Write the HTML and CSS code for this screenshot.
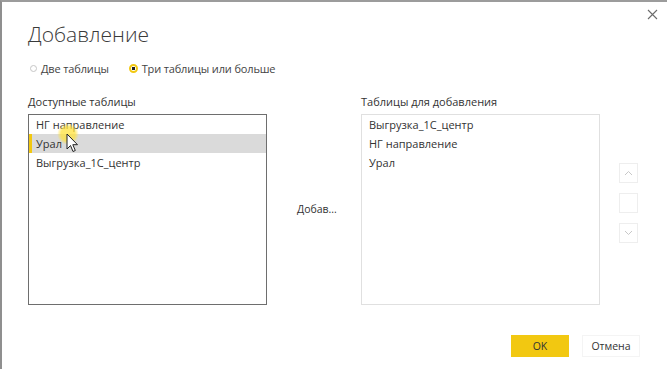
FILE: index.html
```html
<!DOCTYPE html>
<html lang="ru">
<head>
  <meta charset="UTF-8" />
  <title>Добавление</title>
  <link rel="stylesheet" href="styles.css">
</head>
<body>
  <div class="dialog">
    <!-- close -->
    <div class="top-bar">
      <svg class="close" width="11" height="11" viewBox="0 0 11 11">
        <path d="M1 1 L10 10 M10 1 L1 10" stroke="#6b6b6b" stroke-width="1.1" fill="none"/>
      </svg>
    </div>

    <h1 class="title">Добавление</h1>

    <div class="radios">
      <label class="radio"><span class="dot"></span>Две таблицы</label>
      <label class="radio checked"><span class="dot"></span>Три таблицы или больше</label>
    </div>

    <div class="lists">
      <div class="column">
        <p class="label">Доступные таблицы</p>
        <div class="listbox focused">
          <div class="item">НГ направление</div>
          <div class="item selected">Урал</div>
          <div class="item">Выгрузка_1С_центр</div>
          <!-- mouse pointer -->
          <div class="glow"></div>
          <svg class="pointer" width="13" height="20" viewBox="0 0 13 20">
            <path d="M1 1 L1 16 L4.5 12.5 L7 18.5 L9.3 17.5 L6.8 11.7 L11.5 11.7 Z" fill="#fff" stroke="#222" stroke-width="1"/>
          </svg>
        </div>
      </div>

      <div class="middle">
        <span class="add">Добав...</span>
      </div>

      <div class="column">
        <p class="label">Таблицы для добавления</p>
        <div class="listbox">
          <div class="item">Выгрузка_1С_центр</div>
          <div class="item">НГ направление</div>
          <div class="item">Урал</div>
        </div>
      </div>

      <div class="arrows">
        <div class="arrow">
          <svg width="9" height="6" viewBox="0 0 9 6"><path d="M1 5 L4.5 1.5 L8 5" stroke="#c8c8c8" fill="none"/></svg>
        </div>
        <div class="arrow"></div>
        <div class="arrow">
          <svg width="9" height="6" viewBox="0 0 9 6"><path d="M1 1 L4.5 4.5 L8 1" stroke="#c8c8c8" fill="none"/></svg>
        </div>
      </div>
    </div>

    <div class="footer">
      <button class="btn ok">OK</button>
      <button class="btn">Отмена</button>
    </div>
  </div>
</body>
</html>
```

FILE: styles.css
```css
body {
  margin: 0;
  font-family: "Open Sans", "Noto Sans", sans-serif;
  font-size: 11px;
  color: #333;
  background-color: #ffffff;
}

.dialog {
  width: 667px;
  height: 369px;
  box-sizing: border-box;
  border-top: 2px solid #9c9c9c;
  border-left: 2px solid #8f8f8f;
  padding-left: 26px;
  background-color: #ffffff;
}

.top-bar {
  display: flex;
  justify-content: flex-end;
  padding: 7px 9px 0 0;
  height: 10px;
}

.title {
  margin: 0;
  font-size: 21px;
  font-weight: 300;
  color: #3a3a3a;
  line-height: 30px;
  height: 30px;
}

.radios {
  display: flex;
  gap: 20px;
  margin-top: 11px;
  height: 16px;
  align-items: center;
}

.radio {
  display: flex;
  align-items: center;
  gap: 4px;
  color: #444;
  letter-spacing: -0.15px;
}

.dot {
  width: 7px;
  height: 7px;
  margin-left: 2px;
  border-radius: 50%;
  border: 1px solid #c6c6c6;
  box-sizing: border-box;
}

.radio.checked .dot {
  width: 9px;
  height: 9px;
  margin-left: 0;
  border: 2px solid #f2c811;
  background: radial-gradient(circle, #222 0 1.6px, #fff 2px);
}

.lists {
  display: flex;
  margin-top: 18px;
}

.column {
  width: 239px;
}

.label {
  margin: 0 0 4px 0;
  line-height: 16px;
}

.listbox {
  position: relative;
  height: 191px;
  box-sizing: border-box;
  border: 1px solid #e0e0e0;
}

.listbox.focused {
  border-color: #6e6e6e;
}

.item {
  height: 19px;
  line-height: 19px;
  padding-left: 7px;
  color: #333;
}

.item.selected {
  background-color: #dadada;
  border-left: 3px solid #f2c811;
  padding-left: 4px;
}

.glow {
  position: absolute;
  left: 28px;
  top: 8px;
  width: 22px;
  height: 22px;
  border-radius: 50%;
  background: radial-gradient(circle, rgba(255, 226, 60, 0.75) 0 45%, rgba(255, 226, 60, 0) 70%);
}

.pointer {
  position: absolute;
  left: 37px;
  top: 18px;
}

.middle {
  width: 94px;
  display: flex;
  align-items: center;
  padding-top: 19px;
  padding-left: 30px;
  box-sizing: border-box;
}

.add {
  font-size: 10.5px;
  color: #333;
}

.arrows {
  display: flex;
  flex-direction: column;
  gap: 10px;
  padding-top: 69px;
  padding-left: 19px;
}

.arrow {
  width: 19px;
  height: 20px;
  box-sizing: border-box;
  border: 1px solid #eeeeee;
  display: flex;
  align-items: center;
  justify-content: center;
}

.footer {
  display: flex;
  justify-content: flex-end;
  gap: 13px;
  margin-top: 30px;
  padding-right: 27px;
}

.btn {
  width: 58px;
  height: 22px;
  font-family: "Open Sans", "Noto Sans", sans-serif;
  font-size: 10.5px;
  color: #333;
  background-color: #ffffff;
  border: 1px solid #f4f4f4;
  padding: 0;
}

.btn.ok {
  background-color: #f2c811;
  border-color: #f2c811;
}
```
